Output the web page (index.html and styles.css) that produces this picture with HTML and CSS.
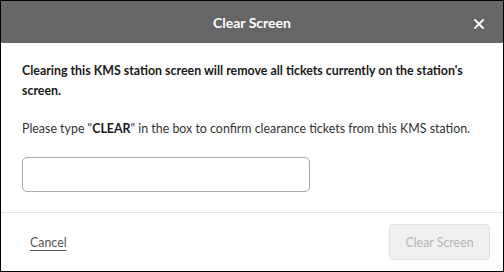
FILE: index.html
```html
<!DOCTYPE html>
<html>
<head>
<meta charset="utf-8">
<link rel="stylesheet" href="styles.css">
</head>
<body>
<div class="dialog">
  <div class="header">
    <div class="title">Clear Screen</div>
    <span class="close"><svg width="10" height="10" viewBox="0 0 10 10"><path d="M1 1L9 9M9 1L1 9" stroke="#fff" stroke-width="1.8" stroke-linecap="square"/></svg></span>
  </div>
  <div class="body">
    <p class="warn">Clearing this KMS station screen will remove all tickets currently on the station's screen.</p>
    <p class="info">Please type "<b>CLEAR</b>" in the box to confirm clearance tickets from this KMS station.</p>
    <input class="field" type="text">
  </div>
  <div class="footer">
    <a class="cancel">Cancel</a>
    <button class="confirm" disabled>Clear Screen</button>
  </div>
</div>
</body>
</html>
```
FILE: styles.css
```css
html, body { margin: 0; padding: 0; }
body { font-family: Lato, "Open Sans", sans-serif; background: #fff; }
.dialog {
  width: 504px; height: 272px; box-sizing: border-box;
  border: 1px solid #000; display: flex; flex-direction: column;
}
.header {
  height: 42px; background: #666; position: relative;
  display: flex; align-items: center; justify-content: center;
}
.title { color: #fff; font-weight: 700; font-size: 14px; }
.close { position: absolute; right: 19px; top: 18px; line-height: 0; }
.body { padding: 18px 21px 0; flex: 1; border-bottom: 1px solid #e3e3e3; }
.warn { margin: 0; font-weight: 700; font-size: 12.4px; line-height: 20px; color: #1a1a1a; }
.info { margin: 18px 0 0; font-size: 12.4px; line-height: 20px; color: #333; }
.info b { color: #1a1a1a; }
.field {
  display: block; margin-top: 18px; width: 288px; height: 35px; box-sizing: border-box;
  border: 1px solid #ababab; border-radius: 5px; outline: none; padding: 0 8px;
}
.footer {
  height: 58px; display: flex; align-items: center; justify-content: space-between;
  padding: 0 13px 0 29px;
}
.cancel { font-size: 12.4px; color: #555; text-decoration: underline; text-underline-offset: 3px; }
.confirm {
  width: 101px; height: 36px; border: 1px solid #e2e2e2; border-radius: 4px;
  background: #f0f0f0; color: #b5b5b5; font-family: Lato, sans-serif; font-size: 12.4px;
}
```
